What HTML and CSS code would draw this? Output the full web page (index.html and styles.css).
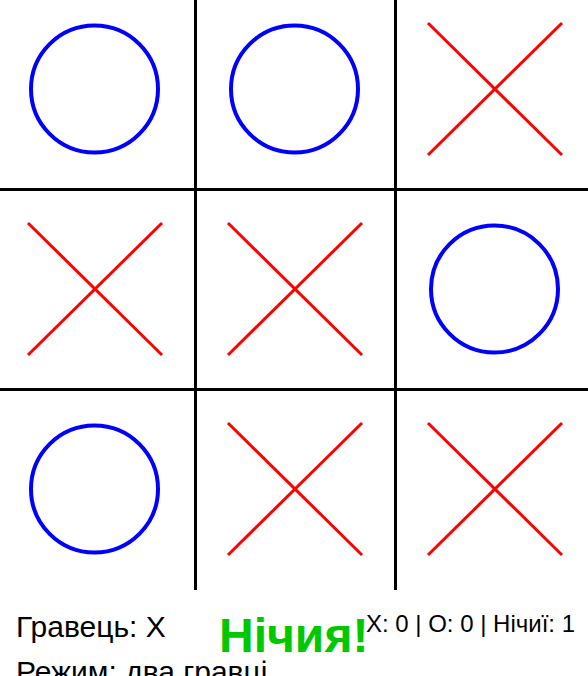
FILE: index.html
```html
<!DOCTYPE html>
<html>
<head>
    <meta charset="utf-8">
    <title>Хрестики-нулики</title>
    <link rel="stylesheet" href="styles.css">
</head>
<body>
    <div class="game">
        <svg class="board" width="588" height="590" viewBox="0 0 588 590">
            <!-- сітка -->
            <rect class="grid" x="194" y="0" width="3" height="590"/>
            <rect class="grid" x="394" y="0" width="3" height="590"/>
            <rect class="grid" x="0" y="188" width="588" height="3"/>
            <rect class="grid" x="0" y="388" width="588" height="3"/>

            <!-- нулики -->
            <circle class="o" cx="94.5" cy="89" r="63.5"/>
            <circle class="o" cx="294.5" cy="89" r="63.5"/>
            <circle class="o" cx="494.5" cy="289" r="63.5"/>
            <circle class="o" cx="94.5" cy="489" r="63.5"/>

            <!-- хрестики -->
            <g class="x" transform="translate(495 89)">
                <line x1="-67" y1="-66" x2="67" y2="66"/>
                <line x1="67" y1="-66" x2="-67" y2="66"/>
            </g>
            <g class="x" transform="translate(95 289)">
                <line x1="-67" y1="-66" x2="67" y2="66"/>
                <line x1="67" y1="-66" x2="-67" y2="66"/>
            </g>
            <g class="x" transform="translate(295 289)">
                <line x1="-67" y1="-66" x2="67" y2="66"/>
                <line x1="67" y1="-66" x2="-67" y2="66"/>
            </g>
            <g class="x" transform="translate(295 489)">
                <line x1="-67" y1="-66" x2="67" y2="66"/>
                <line x1="67" y1="-66" x2="-67" y2="66"/>
            </g>
            <g class="x" transform="translate(495 489)">
                <line x1="-67" y1="-66" x2="67" y2="66"/>
                <line x1="67" y1="-66" x2="-67" y2="66"/>
            </g>
        </svg>

        <div class="info">
            <div class="status">
                <p class="player">Гравець: X</p>
                <p class="mode">Режим: два гравці</p>
            </div>
            <div class="score">X: 0 | O: 0 | Нічиї: 1</div>
            <div class="message">Нічия!</div>
        </div>
    </div>
</body>
</html>
```

FILE: styles.css
```css
* {
    margin: 0;
    padding: 0;
}
html, body {
    height: 100%;
    overflow: hidden;
}
body {
    background: #fff;
    font-family: "Liberation Sans", Arial, sans-serif;
    color: #000;
}
.board {
    display: block;
}
.grid {
    fill: #000;
}
.o {
    fill: none;
    stroke: #0000ff;
    stroke-width: 4;
}
.x line {
    stroke: #ff0000;
    stroke-width: 3;
}
.info {
    position: relative;
    display: flex;
    justify-content: space-between;
    align-items: flex-start;
    padding: 20px 13px 0 16px;
}
.status p {
    font-size: 30px;
    line-height: 32px;
}
.player {
    margin-top: 1px;
    margin-bottom: 13px;
}
.score {
    font-size: 24px;
    line-height: 28px;
}
.message {
    position: absolute;
    left: 219px;
    top: 22px;
    font-size: 48px;
    line-height: 48px;
    font-weight: bold;
    color: #00c800;
}
```
